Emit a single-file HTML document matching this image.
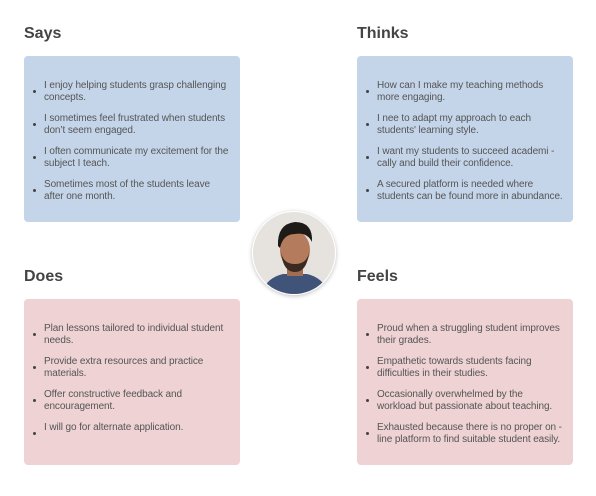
<!DOCTYPE html>
<html><head><style>
body{margin:0;width:596px;height:496px;background:#fff;font-family:"Liberation Sans",Arial,sans-serif;position:relative;overflow:hidden}
h2{position:absolute;margin:0;font-size:16px;font-weight:bold;color:#444}
.box{position:absolute;width:216px;height:166px;border-radius:4px}
.blue{background:#c4d5ea}.pink{background:#eed2d4}
ul{margin:0;padding:0;list-style:none;position:absolute;left:20px;top:24px;width:186px}
li{position:relative;font-size:10px;line-height:11.5px;color:#555;margin-bottom:10px;letter-spacing:-0.1px}
li:before{content:"";position:absolute;left:-11px;top:10px;width:3px;height:3px;border-radius:50%;background:#444}
.av{position:absolute;left:252px;top:211px;width:84px;height:84px;border-radius:50%;overflow:hidden;box-shadow:0 1px 4px rgba(0,0,0,.25);border:1px solid #fff;box-sizing:border-box}
</style></head><body>
<h2 style="left:24px;top:25px">Says</h2>
<h2 style="left:357px;top:25px">Thinks</h2>
<h2 style="left:24px;top:268px">Does</h2>
<h2 style="left:357px;top:268px">Feels</h2>
<div class="box blue" style="left:24px;top:56px"><ul>
<li>I enjoy helping students grasp challenging concepts.</li>
<li>I sometimes feel frustrated when students don’t seem engaged.</li>
<li>I often communicate my excitement for the subject I teach.</li>
<li>Sometimes most of the students leave after one month.</li></ul></div>
<div class="box blue" style="left:357px;top:56px"><ul>
<li>How can I make my teaching methods more engaging.</li>
<li>I nee to adapt my approach to each students' learning style.</li>
<li>I want my students to succeed academi -cally and build their confidence.</li>
<li>A secured platform is needed where students can be found more in abundance.</li></ul></div>
<div class="box pink" style="left:24px;top:299px"><ul>
<li>Plan lessons tailored to individual student needs.</li>
<li>Provide extra resources and practice materials.</li>
<li>Offer constructive feedback and encouragement.</li>
<li>I will go for alternate application.</li></ul></div>
<div class="box pink" style="left:357px;top:299px"><ul>
<li>Proud when a struggling student improves their grades.</li>
<li>Empathetic towards students facing difficulties in their studies.</li>
<li>Occasionally overwhelmed by the workload but passionate about teaching.</li>
<li>Exhausted because there is no proper on -line platform to find suitable student easily.</li></ul></div>
<div class="av"><svg width="84" height="84" viewBox="0 0 84 84">
<rect width="84" height="84" fill="#e6e3df"/>
<path d="M8 84 Q12 66 30 62 L54 62 Q72 66 76 84Z" fill="#3f5478"/>
<rect x="34" y="50" width="16" height="14" fill="#a26e52"/>
<ellipse cx="42" cy="38" rx="15" ry="19" fill="#b47c5c"/>
<path d="M28 40 Q30 60 42 60 Q54 60 56 40 Q54 52 42 52 Q30 52 28 40Z" fill="#3a2a22"/>
<path d="M25 34 Q24 12 42 10 Q60 10 59 30 Q54 20 42 22 Q30 22 27 36Z" fill="#1e1a18"/>
</svg></div>
</body></html>
